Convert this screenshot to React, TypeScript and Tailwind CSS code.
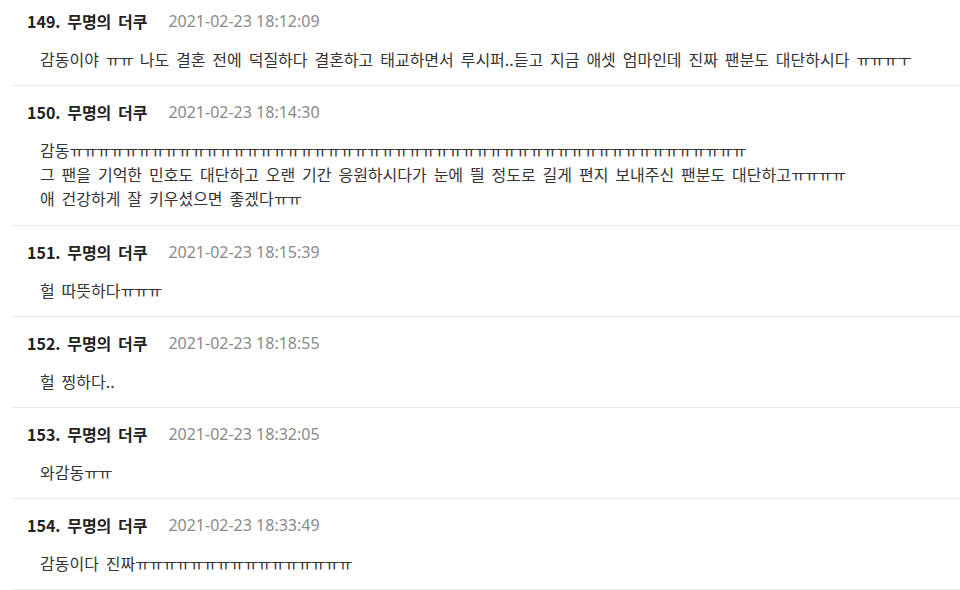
import React from "react";

type Row = { no: number; time: string; lines: string[] };

const rows: Row[] = [
  {
    no: 149,
    time: "2021-02-23 18:12:09",
    lines: [
      "감동이야 ㅠㅠ 나도 결혼 전에 덕질하다 결혼하고 태교하면서 루시퍼..듣고 지금 애셋 엄마인데 진짜 팬분도 대단하시다 ㅠㅠㅠㅜ",
    ],
  },
  {
    no: 150,
    time: "2021-02-23 18:14:30",
    lines: [
      "감동" + "ㅠ".repeat(50),
      "그 팬을 기억한 민호도 대단하고 오랜 기간 응원하시다가 눈에 띌 정도로 길게 편지 보내주신 팬분도 대단하고ㅠㅠㅠㅠ",
      "애 건강하게 잘 키우셨으면 좋겠다ㅠㅠ",
    ],
  },
  { no: 151, time: "2021-02-23 18:15:39", lines: ["헐 따뜻하다ㅠㅠㅠ"] },
  { no: 152, time: "2021-02-23 18:18:55", lines: ["헐 찡하다.."] },
  { no: 153, time: "2021-02-23 18:32:05", lines: ["와감동ㅠㅠ"] },
  { no: 154, time: "2021-02-23 18:33:49", lines: ["감동이다 진짜" + "ㅠ".repeat(16)] },
];

function Jamo({ text }: { text: string }) {
  const parts = text.split(/([ㅠㅜ]+)/);
  return (
    <>
      {parts.map((p, i) =>
        /^[ㅠㅜ]+$/.test(p) ? (
          <span key={i} className="tracking-[-1.2px]">
            {p}
          </span>
        ) : (
          <React.Fragment key={i}>{p}</React.Fragment>
        )
      )}
    </>
  );
}

export default function App() {
  return (
    <div
      className="w-[960px] h-[590px] overflow-hidden bg-white pl-3 [word-spacing:3.3px]"
      style={{ fontFamily: '"Noto Sans CJK KR", "Noto Sans", sans-serif' }}
    >
      {rows.map((r, idx) => (
        <div
          key={r.no}
          className={
            "border-b border-[#e9e9e9] " +
            (idx === 0
              ? "pt-[11px] pb-[14px]"
              : r.lines.length > 1
              ? "pt-4 pb-[15px]"
              : "pt-4 pb-[14px]")
          }
        >
          <div className="pl-[15px] flex items-center h-5 leading-5">
            <span className="text-[16px] font-bold text-[#222222] [word-spacing:3px]">
              {r.no}. 무명의 더쿠
            </span>
            <span
              className="ml-[21px] text-[16px] text-[#8a8a8a] [word-spacing:0px]"
              style={{ fontFamily: '"Noto Sans", sans-serif' }}
            >
              {r.time}
            </span>
          </div>
          <div className="mt-4 pl-[28px] text-[16px] leading-6 text-[#333333]">
            {r.lines.map((l, i) => (
              <div key={i} className="whitespace-nowrap">
                <Jamo text={l} />
              </div>
            ))}
          </div>
        </div>
      ))}
    </div>
  );
}
